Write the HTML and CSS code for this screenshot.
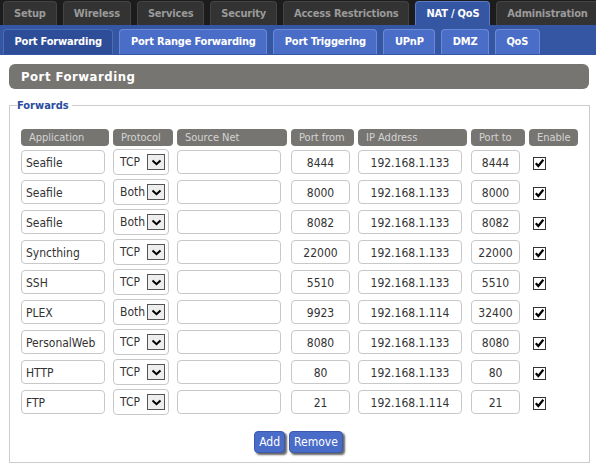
FILE: index.html
```html
<!DOCTYPE html>
<html>
<head>
<meta charset="utf-8">
<link rel="stylesheet" href="styles.css">
</head>
<body>
<div class="topbar">
  <div class="tab">Setup</div>
  <div class="tab">Wireless</div>
  <div class="tab">Services</div>
  <div class="tab">Security</div>
  <div class="tab">Access Restrictions</div>
  <div class="tab active">NAT / QoS</div>
  <div class="tab">Administration</div>
</div>
<div class="subbar">
  <div class="subtab active">Port Forwarding</div>
  <div class="subtab">Port Range Forwarding</div>
  <div class="subtab">Port Triggering</div>
  <div class="subtab">UPnP</div>
  <div class="subtab">DMZ</div>
  <div class="subtab">QoS</div>
</div>
<div class="content">
  <h2 class="pagetitle">Port Forwarding</h2>
  <fieldset class="forwards">
    <legend>Forwards</legend>
    <div class="grid">
      <div class="th">Application</div>
      <div class="th">Protocol</div>
      <div class="th">Source Net</div>
      <div class="th">Port from</div>
      <div class="th">IP Address</div>
      <div class="th">Port to</div>
      <div class="th">Enable</div>
    </div>
    <div id="rows"></div>
    <div class="buttons">
      <button class="btn">Add</button>
      <button class="btn">Remove</button>
    </div>
  </fieldset>
</div>
<script src="script.js"></script>
</body>
</html>
```
FILE: script.js
```js
var data = [
  ["Seafile","TCP","8444","192.168.1.133","8444"],
  ["Seafile","Both","8000","192.168.1.133","8000"],
  ["Seafile","Both","8082","192.168.1.133","8082"],
  ["Syncthing","TCP","22000","192.168.1.133","22000"],
  ["SSH","TCP","5510","192.168.1.133","5510"],
  ["PLEX","Both","9923","192.168.1.114","32400"],
  ["PersonalWeb","TCP","8080","192.168.1.133","8080"],
  ["HTTP","TCP","80","192.168.1.133","80"],
  ["FTP","TCP","21","192.168.1.114","21"]
];
var host = document.getElementById("rows");
data.forEach(function (r) {
  var row = document.createElement("div");
  row.className = "grid row";
  row.innerHTML =
    '<div><span class="inp app">' + r[0] + '</span></div>' +
    '<div><span class="sel"><span class="seltext">' + r[1] + '</span><span class="arrow"><svg width="11" height="7" viewBox="0 0 11 7"><path d="M1.5 1.5 L5.5 5.2 L9.5 1.5" fill="none" stroke="#000" stroke-width="2"/></svg></span></span></div>' +
    '<div><span class="inp src"></span></div>' +
    '<div><span class="inp num pf">' + r[2] + '</span></div>' +
    '<div><span class="inp num ip">' + r[3] + '</span></div>' +
    '<div><span class="inp num pt">' + r[4] + '</span></div>' +
    '<div><span class="chk"><svg width="11" height="11" viewBox="0 0 11 11"><path d="M1.8 5.2 L4.3 8 L9.3 1.8" fill="none" stroke="#000" stroke-width="2.2"/></svg></span></div>';
  host.appendChild(row);
});
```
FILE: styles.css
```css
* { box-sizing: border-box; }
body {
  margin: 0;
  background: #fff;
  font-family: "DejaVu Sans Condensed", "DejaVu Sans", sans-serif;
  font-stretch: condensed;
  font-size: 12px;
  color: #333;
}
.topbar {
  display: flex;
  gap: 6px;
  background: #1c1c1c;
  height: 25px;
  padding: 1px 0 0 3px;
  overflow: hidden;
}
.tab {
  flex: none;
  height: 24px;
  padding: 0 10px;
  line-height: 24px;
  background: #333333;
  border: 1px solid #444;
  border-bottom: none;
  border-radius: 4px 4px 0 0;
  color: #9a9a9a;
  font-weight: bold;
  font-size: 11px;
  letter-spacing: -0.2px;
  white-space: nowrap;
}
.tab.active {
  background: #3556a3;
  border-color: #5a7bc6;
  color: #fff;
}
.subbar {
  display: flex;
  gap: 6px;
  background: #3556a3;
  height: 30px;
  padding: 4px 0 0 3px;
}
.subtab {
  height: 25px;
  padding: 0 10.5px;
  line-height: 24px;
  background: #4a6ec8;
  border: 1px solid #6a8ad8;
  border-bottom: none;
  border-radius: 4px 4px 0 0;
  color: #fff;
  font-weight: bold;
  font-size: 11px;
  letter-spacing: -0.2px;
  white-space: nowrap;
}
.subtab.active {
  background: #2e4d98;
  border-color: #4d6cb8;
}
.content {
  padding: 9px 7px 0 9px;
}
.pagetitle {
  margin: 0;
  height: 25px;
  line-height: 25px;
  background: #777571;
  border-radius: 6px;
  color: #fff;
  font-size: 13px;
  font-weight: bold;
  letter-spacing: 0.5px;
  padding-left: 12px;
}
.forwards {
  margin: 10px 0 0 0;
  width: 581px;
  height: 364px;
  border: 1px solid #cccccc;
  padding: 17px 11px 0 11px;
}
.forwards legend {
  color: #2a4c9e;
  font-weight: bold;
  font-size: 11px;
  padding: 0 3px 0 0;
  margin-left: -4px;
}
.grid {
  display: grid;
  grid-template-columns: 88px 60px 110px 63px 109px 54px 49px;
  column-gap: 4px;
}
.th {
  height: 17px;
  line-height: 17px;
  background: #777571;
  color: #d4d4d4;
  border-radius: 4px;
  padding-left: 8px;
  font-size: 11px;
}
.row {
  margin-top: 4px;
  height: 26px;
}
.row + .row { margin-top: 4px; }
.inp {
  display: block;
  height: 24px;
  line-height: 24px;
  border: 1px solid #c8c8c8;
  border-radius: 4px;
  background: #fff;
  color: #333;
  font-size: 12px;
  white-space: nowrap;
  overflow: hidden;
}
.app { width: 84px; padding-left: 4px; }
.src { width: 104px; }
.num { text-align: center; }
.pf { width: 59px; }
.ip { width: 104px; }
.pt { width: 49px; }
.sel {
  display: flex;
  align-items: center;
  width: 56px;
  height: 26px;
  margin-top: -1px;
  border: 1px solid #c8c8c8;
  border-radius: 4px;
  padding-left: 6px;
  background: #fff;
  color: #333;
  font-size: 12px;
}
.seltext { width: 27px; }
.arrow {
  display: flex;
  align-items: center;
  justify-content: center;
  width: 18px;
  height: 16px;
  background: #eeeeee;
  border: 1px solid #555;
}
.chk {
  display: flex;
  align-items: center;
  justify-content: center;
  width: 13px;
  height: 13px;
  margin: 7px 0 0 4px;
  border: 1px solid #333;
  background: #fff;
}
.buttons {
  display: flex;
  justify-content: center;
  gap: 4px;
  margin-top: 15px;
  padding-right: 2px;
}
.btn {
  height: 22px;
  padding: 0 4px;
  background: #4a6cc9;
  border: 1px solid #3a5ab0;
  border-radius: 4px;
  color: #fff;
  font-family: inherit;
  font-size: 12px;
  box-shadow: 2px 2px 2px #666;
}
```
